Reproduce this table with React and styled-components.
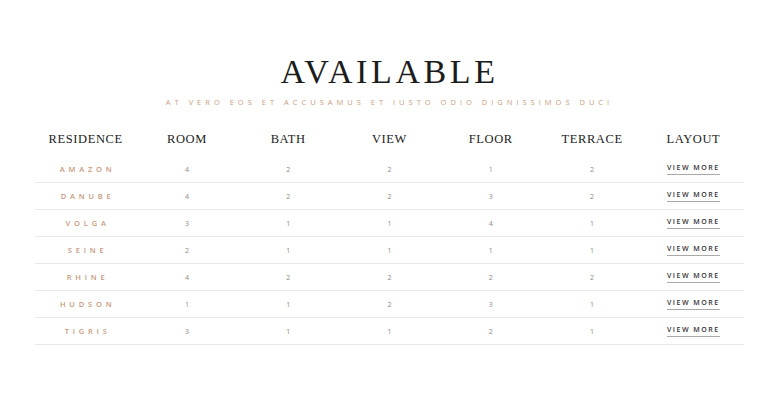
import React from "react";
import styled, { createGlobalStyle } from "styled-components";

const GlobalStyle = createGlobalStyle`
  html, body {
    margin: 0;
    padding: 0;
    background: #fff;
  }
`;

const rows = [
  { name: "AMAZON", room: 4, bath: 2, view: 2, floor: 1, terrace: 2 },
  { name: "DANUBE", room: 4, bath: 2, view: 2, floor: 3, terrace: 2 },
  { name: "VOLGA", room: 3, bath: 1, view: 1, floor: 4, terrace: 1 },
  { name: "SEINE", room: 2, bath: 1, view: 1, floor: 1, terrace: 1 },
  { name: "RHINE", room: 4, bath: 2, view: 2, floor: 2, terrace: 2 },
  { name: "HUDSON", room: 1, bath: 1, view: 2, floor: 3, terrace: 1 },
  { name: "TIGRIS", room: 3, bath: 1, view: 1, floor: 2, terrace: 1 },
];

const columns = ["RESIDENCE", "ROOM", "BATH", "VIEW", "FLOOR", "TERRACE", "LAYOUT"];

export default function App() {
  return (
    <Page>
      <GlobalStyle />
      <Title>AVAILABLE</Title>
      <Subtitle>At vero eos et accusamus et iusto odio dignissimos duci</Subtitle>
      <Table>
        <HeadRow>
          {columns.map((c) => (
            <HeadCell key={c}>{c}</HeadCell>
          ))}
        </HeadRow>
        {rows.map((r) => (
          <Row key={r.name}>
            <Name>{r.name}</Name>
            <Num>{r.room}</Num>
            <Num>{r.bath}</Num>
            <Num>{r.view}</Num>
            <Num>{r.floor}</Num>
            <Num>{r.terrace}</Num>
            <Cell>
              <More href="#">VIEW MORE</More>
            </Cell>
          </Row>
        ))}
      </Table>
    </Page>
  );
}

const Page = styled.div`
  width: 770px;
  height: 399px;
  box-sizing: border-box;
  padding: 53px 26px 0 35px;
  display: flex;
  flex-direction: column;
  align-items: center;
`;

const Title = styled.h1`
  margin: 0;
  font-family: "Liberation Serif", "DejaVu Serif", serif;
  font-weight: 400;
  font-size: 34px;
  line-height: 38px;
  letter-spacing: 3.6px;
  color: #1c1c1c;
  text-align: center;
`;

const Subtitle = styled.p`
  margin: 6px 0 0 0;
  font-family: "Open Sans", "Liberation Sans", sans-serif;
  font-size: 7.5px;
  line-height: 10px;
  letter-spacing: 4px;
  text-transform: uppercase;
  color: #c9a083;
  text-align: center;
`;

const Table = styled.div`
  width: 100%;
  margin-top: 19px;
  display: flex;
  flex-direction: column;
`;

const HeadRow = styled.div`
  display: grid;
  grid-template-columns: repeat(7, 1fr);
  height: 26px;
  padding-bottom: 4px;
  align-items: center;
`;

const HeadCell = styled.div`
  text-align: center;
  font-family: "Liberation Serif", "DejaVu Serif", serif;
  font-size: 12.5px;
  letter-spacing: 0.6px;
  color: #222;
`;

const Row = styled.div`
  display: grid;
  grid-template-columns: repeat(7, 1fr);
  height: 26px;
  align-items: center;
  border-bottom: 1px solid #e9e9e9;
`;

const Cell = styled.div`
  text-align: center;
  display: flex;
  justify-content: center;
`;

const Name = styled(Cell)`
  font-family: "Open Sans", "Liberation Sans", sans-serif;
  font-size: 7.5px;
  font-weight: 600;
  letter-spacing: 3.8px;
  color: #c59a7d;
  padding-left: 4px;
`;

const Num = styled(Cell)`
  font-family: "Open Sans", "Liberation Sans", sans-serif;
  font-size: 7px;
  color: #8a8a8a;
`;

const More = styled.a`
  font-family: "Open Sans", "Liberation Sans", sans-serif;
  font-size: 7px;
  font-weight: 600;
  letter-spacing: 1.5px;
  color: #333;
  text-decoration: none;
  padding-bottom: 2px;
  border-bottom: 1.5px solid #a9a9a9;
  line-height: 9px;
`;
